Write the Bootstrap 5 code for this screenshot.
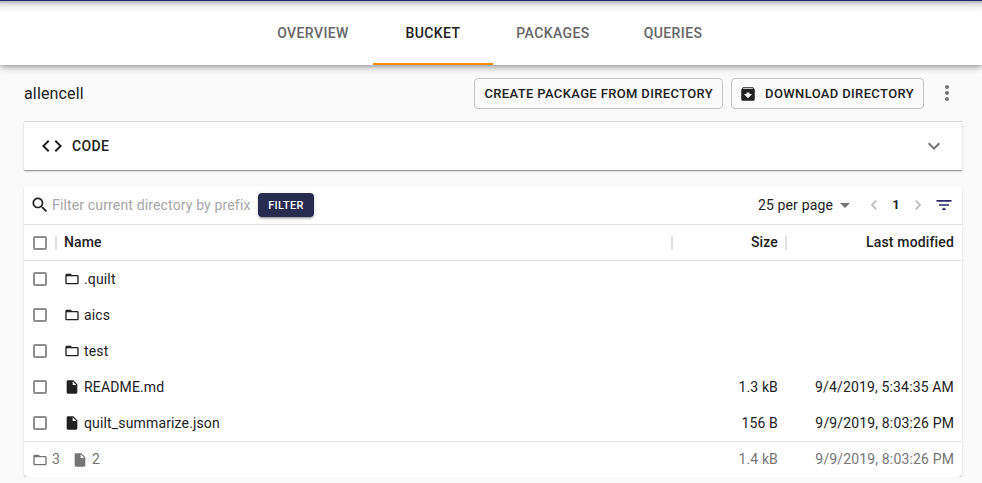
<!DOCTYPE html>
<html lang="en">
<head>
<meta charset="utf-8">
<meta name="viewport" content="width=device-width, initial-scale=1">
<title>allencell</title>
<link href="https://cdn.jsdelivr.net/npm/bootstrap@5.3.0/dist/css/bootstrap.min.css" rel="stylesheet">
<style>
  :root { --ink: #212121; --muted: #757575; --line: #e0e0e0; --navy: #282b50; }
  body { font-family: Roboto, "Liberation Sans", sans-serif; font-size: 14px; line-height: 20px; letter-spacing: .15px; color: var(--ink); background: #fafafa; overflow: hidden; }
  svg { display: block; flex: none; fill: currentColor; }
  .topline { height: 1px; background: #282b70; }
  .tabs { height: 64px; background: linear-gradient(#b4b4b4 0, #cfcfcf 2px, #e6e6e6 4px, #f4f4f4 7px, #fcfcfc 10px, #fff 13px); box-shadow: 0 2px 4px -1px rgba(0,0,0,.2), 0 4px 5px rgba(0,0,0,.14), 0 1px 10px rgba(0,0,0,.12); }
  .tabs .nav { margin-left: 4px; }
  .tabs .nav-link { width: 120px; height: 64px; border-top: 2px solid transparent; border-bottom: 2px solid transparent; color: #666; font-weight: 500; letter-spacing: .4px; }
  .tabs .nav-link.active { color: var(--ink); border-bottom-color: #fb8c00; }
  .page { padding: 0 20px 0 24px; }
  .crumb { font-size: 16px; line-height: 24px; }
  .headrow { height: 31px; margin-top: 13px; }
  .outlined { --bs-btn-color: var(--ink); --bs-btn-border-color: #c3c3c3; --bs-btn-border-radius: 4px; --bs-btn-padding-x: 9px; --bs-btn-padding-y: 0; --bs-btn-font-size: 13px; --bs-btn-font-weight: 500; height: 31px; letter-spacing: .36px; }
  .outlined svg { margin-left: -2px; }
  .more { margin: 0 3px 2px 11px; }
  .grey { fill: var(--muted); }
  .pale { fill: #bdbdbd; }
  .panel { background: #fff; width: 938px; box-shadow: 0 2px 1px -1px rgba(0,0,0,.2), 0 1px 1px rgba(0,0,0,.14), 0 1px 3px rgba(0,0,0,.12); }
  .code { height: 48px; margin-top: 13px; padding: 0 16px; font-weight: 500; letter-spacing: .4px; box-shadow: 0 -1px 0 #d6d6d6, 0 2px 1px -1px rgba(0,0,0,.2), 0 1px 1px rgba(0,0,0,.14), 0 1px 3px rgba(0,0,0,.12); }
  .grid { margin-top: 16px; border-radius: 4px; }
  .toolbar { height: 39px; border-bottom: 1px solid var(--line); padding: 0 8px 0 6px; }
  .prefix { width: 202px; height: 32px; padding: 0; margin: 0 4px 0 2px; border: 0; background: none; color: var(--ink); letter-spacing: .15px; }
  .prefix::placeholder { color: #a6a6a6; opacity: 1; }
  .apply { --bs-btn-color: #fff; --bs-btn-bg: var(--navy); --bs-btn-border-width: 0; --bs-btn-border-radius: 4px; --bs-btn-font-size: 11px; --bs-btn-font-weight: 500; --bs-btn-padding-x: 8px; --bs-btn-padding-y: 0; height: 24px; width: 56px; letter-spacing: .31px; padding-top: 3px; white-space: nowrap; box-shadow: 0 3px 1px -2px rgba(0,0,0,.2), 0 2px 2px rgba(0,0,0,.14), 0 1px 5px rgba(0,0,0,.12); }
  .current { width: 24px; font-size: 13px; }
  .pager-prev { margin-left: 7px; }
  .pager-next { margin-right: 6px; }
  .line { display: grid; grid-template-columns: 33px 616px 114px 175px; height: 36px; align-items: center; padding-bottom: 1px; }
  .line > * { padding: 0 8px 0 7px; }
  .line > :first-child { padding-left: 9px; }
  .line > .num { text-align: right; }
  .line > .num:nth-child(3) { padding-right: 9px; }
  .line svg { margin-top: 1px; }
  .titles { font-weight: 500; border-bottom: 1px solid var(--line); padding-bottom: 2px; }
  .titles > .sep { border-right: 2px solid var(--line); height: 14px; display: flex; align-items: center; margin-top: 2px; }
  .titles > .sep span { position: relative; top: -1px; }
  .titles > .num.sep:nth-child(3) { justify-content: flex-end; padding-right: 7px; }
  .tick { appearance: none; width: 14px; height: 14px; margin: 0; border: 2px solid #8f8f8f; border-radius: 2px; display: block; background: #fff; }
  .totals { height: 36px; border-top: 1px solid var(--line); color: var(--muted); padding: 0 8px 1px; }
  .totals svg { margin-top: 2px; }
  .totals .num { width: 176px; text-align: right; }
  .totals .second { margin-left: 12px; }
</style>
<script src="https://cdn.jsdelivr.net/npm/bootstrap@5.3.0/dist/js/bootstrap.bundle.min.js"></script>
</head>
<body>
<svg class="d-none">
  <symbol id="folder" viewBox="0 0 24 24"><path d="M20 6h-8l-2-2H4c-1.100 0-1.990.9-1.990 2L2 18c0 1.100.9 2 2 2h16c1.100 0 2-.9 2-2V8c0-1.100-.9-2-2-2zm0 12H4V8h16v10z"/></symbol>
  <symbol id="file" viewBox="0 0 24 24"><path d="M6 2c-1.100 0-1.990.9-1.990 2L4 20c0 1.100.890 2 1.990 2H18c1.100 0 2-.9 2-2V8l-6-6H6zm7 7V3.500L18.500 9H13z"/></symbol>
</svg>
<div class="topline"></div>
<header class="tabs d-flex justify-content-center">
  <nav class="nav">
    <a class="nav-link d-flex align-items-center justify-content-center p-0" href="#">OVERVIEW</a>
    <a class="nav-link d-flex align-items-center justify-content-center p-0 active" href="#">BUCKET</a>
    <a class="nav-link d-flex align-items-center justify-content-center p-0" href="#">PACKAGES</a>
    <a class="nav-link d-flex align-items-center justify-content-center p-0" href="#">QUERIES</a>
  </nav>
</header>
<main class="page">
  <div class="headrow d-flex align-items-center">
    <div class="crumb me-auto">allencell</div>
    <button class="btn outlined me-2">CREATE PACKAGE FROM DIRECTORY</button>
    <button class="btn outlined d-flex align-items-center">
      <svg class="me-2" width="18" height="18" viewBox="0 0 24 24"><path d="M20.540 5.230l-1.390-1.680C18.880 3.210 18.470 3 18 3H6c-.470 0-.880.210-1.160.550L3.460 5.230C3.170 5.570 3 6.020 3 6.500V19c0 1.100.9 2 2 2h14c1.100 0 2-.9 2-2V6.500c0-.480-.170-.930-.460-1.270zM12 17.500L6.500 12H10v-2h4v2h3.500L12 17.500zM5.120 5l.810-1h12l.940 1H5.120z"/></svg>
      DOWNLOAD DIRECTORY</button>
    <svg class="more grey" width="24" height="24" viewBox="0 0 24 24"><path d="M12 8c1.100 0 2-.9 2-2s-.9-2-2-2-2 .9-2 2 .9 2 2 2zm0 2c-1.100 0-2 .9-2 2s.9 2 2 2 2-.9 2-2-.9-2-2-2zm0 6c-1.100 0-2 .9-2 2s.9 2 2 2 2-.9 2-2-.9-2-2-2z"/></svg>
  </div>
  <section class="panel code d-flex align-items-center">
    <svg class="me-2" width="24" height="24" viewBox="0 0 24 24"><path d="M9.400 16.600L4.800 12l4.600-4.600L8 6l-6 6 6 6 1.400-1.400zm5.200 0l4.600-4.600-4.600-4.600L16 6l6 6-6 6-1.400-1.400z"/></svg>
    <span class="me-auto">CODE</span>
    <svg class="grey" width="24" height="24" viewBox="0 0 24 24"><path d="M16.590 8.590L12 13.170 7.410 8.590 6 10l6 6 6-6z"/></svg>
  </section>
  <section class="panel grid">
    <div class="toolbar d-flex align-items-center">
      <svg width="20" height="20" viewBox="0 0 24 24"><path d="M15.500 14h-.790l-.280-.270C15.410 12.590 16 11.110 16 9.500 16 5.910 13.090 3 9.500 3S3 5.910 3 9.500 5.910 16 9.500 16c1.610 0 3.090-.590 4.230-1.570l.270.280v.790l5 4.990L20.490 19l-4.990-5zm-6 0C7.010 14 5 11.990 5 9.500S7.010 5 9.500 5 14 7.010 14 9.500 11.990 14 9.500 14z"/></svg>
      <input class="prefix" placeholder="Filter current directory by prefix">
      <button class="btn apply me-auto">FILTER</button>
      <span>25 per page</span>
      <svg class="grey" width="24" height="24" viewBox="0 0 24 24"><path d="M7 10l5 5 5-5z"/></svg>
      <svg class="pale pager-prev" width="20" height="20" viewBox="0 0 24 24"><path d="M15.410 7.410L14 6l-6 6 6 6 1.410-1.410L10.830 12z"/></svg>
      <b class="current text-center">1</b>
      <svg class="pale pager-next" width="20" height="20" viewBox="0 0 24 24"><path d="M10 6L8.590 7.410 13.170 12l-4.580 4.590L10 18l6-6z"/></svg>
      <svg width="20" height="20" viewBox="0 0 24 24"><path fill="#282b60" d="M10 18h4v-2h-4v2zM3 6v2h18V6H3zm3 7h12v-2H6v2z"/></svg>
    </div>
    <div class="line titles"><div class="sep"><input type="checkbox" class="tick"></div><div class="sep"><span>Name</span></div><div class="num sep"><span>Size</span></div><div class="num">Last modified</div></div>
    <div class="line"><div><input type="checkbox" class="tick"></div><div class="d-flex align-items-center gap-1"><svg width="16" height="16"><use href="#folder"/></svg>.quilt</div></div>
    <div class="line"><div><input type="checkbox" class="tick"></div><div class="d-flex align-items-center gap-1"><svg width="16" height="16"><use href="#folder"/></svg>aics</div></div>
    <div class="line"><div><input type="checkbox" class="tick"></div><div class="d-flex align-items-center gap-1"><svg width="16" height="16"><use href="#folder"/></svg>test</div></div>
    <div class="line"><div><input type="checkbox" class="tick"></div><div class="d-flex align-items-center gap-1"><svg width="16" height="16"><use href="#file"/></svg>README.md</div><div class="num">1.3 kB</div><div class="num">9/4/2019, 5:34:35 AM</div></div>
    <div class="line"><div><input type="checkbox" class="tick"></div><div class="d-flex align-items-center gap-1"><svg width="16" height="16"><use href="#file"/></svg>quilt_summarize.json</div><div class="num">156 B</div><div class="num">9/9/2019, 8:03:26 PM</div></div>
    <div class="totals d-flex align-items-center">
      <svg class="me-1" width="16" height="16"><use href="#folder"/></svg><span>3</span>
      <svg class="second me-1" width="16" height="16"><use href="#file"/></svg><span class="me-auto">2</span>
      <span>1.4 kB</span><span class="num">9/9/2019, 8:03:26 PM</span>
    </div>
  </section>
</main>
</body>
</html>
